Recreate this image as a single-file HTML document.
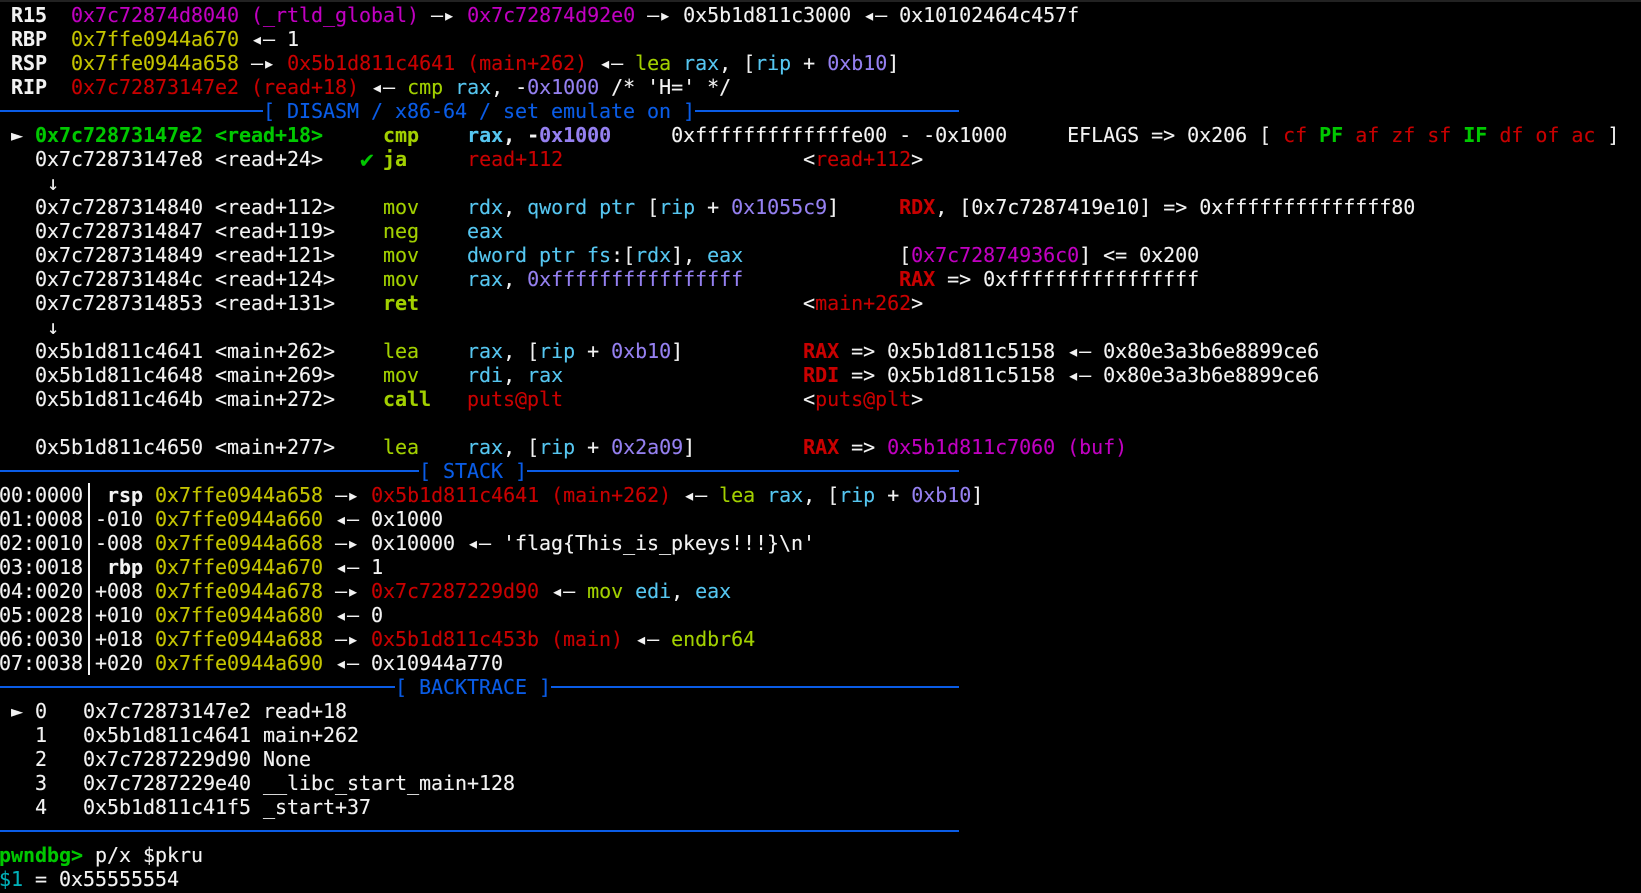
<!DOCTYPE html>
<html>
<head>
<meta charset="utf-8">
<style>
html,body{margin:0;padding:0;background:#000;width:1641px;height:893px;overflow:hidden}
#top{position:absolute;left:0;top:0;width:1641px;height:2px;background:#222}
pre{position:absolute;left:-1px;top:3px;margin:0;font-family:"DejaVu Sans Mono","Liberation Mono",monospace;font-size:20px;line-height:24px;letter-spacing:-0.041px;color:#f2f2f2;white-space:pre;-webkit-text-stroke:.12px currentColor}
.r{color:#c80000}.m{color:#c000c0}.y{color:#c4c400}.g{color:#a2d000}.c{color:#56c6f0}.p{color:#9580f0}
.l{color:#0a5ce6}.G{color:#00c800}.t{color:#00b0b8}.B{font-weight:bold}
.k{display:inline-block;width:12px;font-size:23px;line-height:0;font-weight:bold;color:#00c800;transform:translate(1px,1px)}
.h{position:absolute;height:2px;background:#0a5ce6}
#bar{position:absolute;left:88px;top:483px;width:2px;height:192px;background:#f2f2f2}
</style>
</head>
<body>
<div id="top"></div>
<div class="h" style="left:0;top:110px;width:263px"></div>
<div class="h" style="left:695px;top:110px;width:264px"></div>
<div class="h" style="left:0;top:470px;width:419px"></div>
<div class="h" style="left:527px;top:470px;width:432px"></div>
<div class="h" style="left:0;top:686px;width:395px"></div>
<div class="h" style="left:551px;top:686px;width:408px"></div>
<div class="h" style="left:0;top:830px;width:959px"></div>
<div id="bar"></div>
<pre><span class="B"> R15</span>  <span class="m">0x7c72874d8040 (_rtld_global)</span> —▸ <span class="m">0x7c72874d92e0</span> —▸ 0x5b1d811c3000 ◂— 0x10102464c457f
<span class="B"> RBP</span>  <span class="y">0x7ffe0944a670</span> ◂— 1
<span class="B"> RSP</span>  <span class="y">0x7ffe0944a658</span> —▸ <span class="r">0x5b1d811c4641 (main+262)</span> ◂— <span class="g">lea</span> <span class="c">rax</span>, [<span class="c">rip</span> + <span class="p">0xb10</span>]
<span class="B"> RIP</span>  <span class="r">0x7c72873147e2 (read+18)</span> ◂— <span class="g">cmp</span> <span class="c">rax</span>, -<span class="p">0x1000</span> /* 'H=' */
                      <span class="l">[ DISASM / x86-64 / set emulate on ]</span>
 ► <span class="G B">0x7c72873147e2 &lt;read+18&gt;</span>     <span class="g B">cmp</span>    <span class="c B">rax</span><span class="B">, -</span><span class="p B">0x1000</span>     0xfffffffffffffe00 - -0x1000     EFLAGS =&gt; 0x206 [ <span class="r">cf</span> <span class="G B">PF</span> <span class="r">af</span> <span class="r">zf</span> <span class="r">sf</span> <span class="G B">IF</span> <span class="r">df</span> <span class="r">of</span> <span class="r">ac</span> ]
   0x7c72873147e8 &lt;read+24&gt;   <span class="k">✔</span> <span class="g B">ja</span>     <span class="r">read+112</span>                    &lt;<span class="r">read+112</span>&gt;
    ↓
   0x7c7287314840 &lt;read+112&gt;    <span class="g">mov</span>    <span class="c">rdx</span>, <span class="c">qword ptr</span> [<span class="c">rip</span> + <span class="p">0x1055c9</span>]     <span class="r B">RDX</span>, [0x7c7287419e10] =&gt; 0xffffffffffffff80
   0x7c7287314847 &lt;read+119&gt;    <span class="g">neg</span>    <span class="c">eax</span>
   0x7c7287314849 &lt;read+121&gt;    <span class="g">mov</span>    <span class="c">dword ptr fs</span>:[<span class="c">rdx</span>], <span class="c">eax</span>             [<span class="m">0x7c72874936c0</span>] &lt;= 0x200
   0x7c728731484c &lt;read+124&gt;    <span class="g">mov</span>    <span class="c">rax</span>, <span class="p">0xffffffffffffffff</span>             <span class="r B">RAX</span> =&gt; 0xffffffffffffffff
   0x7c7287314853 &lt;read+131&gt;    <span class="g B">ret</span>                                <span>&lt;</span><span class="r">main+262</span>&gt;
    ↓
   0x5b1d811c4641 &lt;main+262&gt;    <span class="g">lea</span>    <span class="c">rax</span>, [<span class="c">rip</span> + <span class="p">0xb10</span>]          <span class="r B">RAX</span> =&gt; 0x5b1d811c5158 ◂— 0x80e3a3b6e8899ce6
   0x5b1d811c4648 &lt;main+269&gt;    <span class="g">mov</span>    <span class="c">rdi</span>, <span class="c">rax</span>                    <span class="r B">RDI</span> =&gt; 0x5b1d811c5158 ◂— 0x80e3a3b6e8899ce6
   0x5b1d811c464b &lt;main+272&gt;    <span class="g B">call</span>   <span class="r">puts@plt</span>                    &lt;<span class="r">puts@plt</span>&gt;

   0x5b1d811c4650 &lt;main+277&gt;    <span class="g">lea</span>    <span class="c">rax</span>, [<span class="c">rip</span> + <span class="p">0x2a09</span>]         <span class="r B">RAX</span> =&gt; <span class="m">0x5b1d811c7060 (buf)</span>
                                   <span class="l">[ STACK ]</span>
00:0000  <span class="B">rsp</span> <span class="y">0x7ffe0944a658</span> —▸ <span class="r">0x5b1d811c4641 (main+262)</span> ◂— <span class="g">lea</span> <span class="c">rax</span>, [<span class="c">rip</span> + <span class="p">0xb10</span>]
01:0008 -010 <span class="y">0x7ffe0944a660</span> ◂— 0x1000
02:0010 -008 <span class="y">0x7ffe0944a668</span> —▸ 0x10000 ◂— 'flag{This_is_pkeys!!!}\n'
03:0018  <span class="B">rbp</span> <span class="y">0x7ffe0944a670</span> ◂— 1
04:0020 +008 <span class="y">0x7ffe0944a678</span> —▸ <span class="r">0x7c7287229d90</span> ◂— <span class="g">mov</span> <span class="c">edi</span>, <span class="c">eax</span>
05:0028 +010 <span class="y">0x7ffe0944a680</span> ◂— 0
06:0030 +018 <span class="y">0x7ffe0944a688</span> —▸ <span class="r">0x5b1d811c453b (main)</span> ◂— <span class="g">endbr64</span>
07:0038 +020 <span class="y">0x7ffe0944a690</span> ◂— 0x10944a770
                                 <span class="l">[ BACKTRACE ]</span>
 ► 0   0x7c72873147e2 read+18
   1   0x5b1d811c4641 main+262
   2   0x7c7287229d90 None
   3   0x7c7287229e40 __libc_start_main+128
   4   0x5b1d811c41f5 _start+37

<span class="G B">pwndbg&gt;</span> p/x $pkru
<span class="t">$1</span> = 0x55555554</pre>
</body>
</html>
